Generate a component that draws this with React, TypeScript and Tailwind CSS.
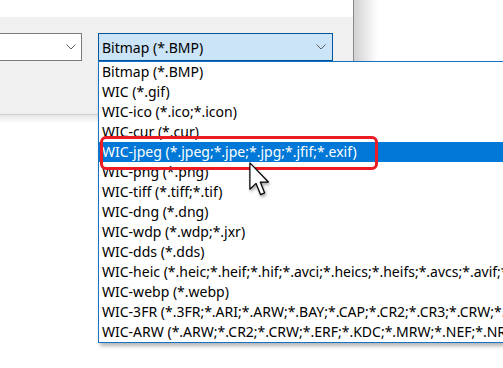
import React from 'react'

const formats = [
  'Bitmap (*.BMP)',
  'WIC (*.gif)',
  'WIC-ico (*.ico;*.icon)',
  'WIC-cur (*.cur)',
  'WIC-jpeg (*.jpeg;*.jpe;*.jpg;*.jfif;*.exif)',
  'WIC-png (*.png)',
  'WIC-tiff (*.tiff;*.tif)',
  'WIC-dng (*.dng)',
  'WIC-wdp (*.wdp;*.jxr)',
  'WIC-dds (*.dds)',
  'WIC-heic (*.heic;*.heif;*.hif;*.avci;*.heics;*.heifs;*.avcs;*.avif;*.avis)',
  'WIC-webp (*.webp)',
  'WIC-3FR (*.3FR;*.ARI;*.ARW;*.BAY;*.CAP;*.CR2;*.CR3;*.CRW;*.DCR;*.DCS)',
  'WIC-ARW (*.ARW;*.CR2;*.CRW;*.ERF;*.KDC;*.MRW;*.NEF;*.NRW;*.ORF)',
]

const selected = 4

function Chevron() {
  return (
    <svg width="10" height="6" viewBox="0 0 10 6" className="shrink-0">
      <path d="M0.5 0.5 L5 5 L9.5 0.5" fill="none" stroke="#5f5f5f" strokeWidth="1" />
    </svg>
  )
}

function Cursor() {
  return (
    <svg
      width="22"
      height="36"
      viewBox="0 0 12.5 20.5"
      className="drop-shadow-[1px_2px_1.5px_rgba(0,0,0,0.35)]"
    >
      <path
        d="M0.5 0.5 L0.5 15.5 L4 12.2 L6.6 18.6 L8.9 17.6 L6.4 11.4 L11 11.4 Z"
        fill="#fff"
        stroke="#000"
        strokeWidth="0.7"
        strokeLinejoin="round"
      />
    </svg>
  )
}

export default function App() {
  return (
    <div className="relative w-[503px] h-[368px] overflow-hidden bg-white text-black font-['Noto_Sans',sans-serif] text-[14px]">
      {/* Dialog behind the dropdown */}
      <div className="flex">
        <div className="w-[354px] h-[115px] flex flex-col border-r border-b border-r-[#8a8a8a] border-b-[#cfcfcf]">
          <div className="h-[17px] bg-white" />
          <div className="flex-1 bg-[#f0f0f0] pt-[16px] flex items-start gap-[16px]">
            <div className="w-[82px] h-[28px] bg-white border border-l-0 border-[#7a7a7a] flex items-center justify-end pr-[5px]">
              <Chevron />
            </div>
            <div className="w-[235px] h-[28px] bg-[#cce4f7] border border-[#005499] flex items-center justify-between pl-[3px] pr-[6px]">
              <span>Bitmap (*.BMP)</span>
              <Chevron />
            </div>
          </div>
        </div>
        <div className="w-[24px] h-[115px] bg-gradient-to-r from-[#d2d2d2] to-white" />
      </div>
      <div className="w-[98px] h-[8px] bg-gradient-to-b from-[#e6e6e6] to-white" />

      {/* Dropdown list */}
      <ul className="absolute left-[98px] top-[61px] w-[440px] bg-white border border-[#1572c9] shadow-[2px_3px_4px_rgba(0,0,0,0.3)]">
        {formats.map((f, i) => (
          <li
            key={f}
            className={`h-[20px] leading-[20px] pl-[3px] whitespace-nowrap overflow-hidden ${
              i === selected ? 'bg-[#0078d7] text-white' : ''
            }`}
          >
            {f}
          </li>
        ))}
      </ul>

      {/* Annotation */}
      <div className="absolute left-[100px] top-[136px] w-[278px] h-[34px] border-[3px] border-[#ec1c24] rounded-[6px]" />

      {/* Mouse pointer */}
      <div className="absolute left-[249px] top-[162px]">
        <Cursor />
      </div>
    </div>
  )
}
